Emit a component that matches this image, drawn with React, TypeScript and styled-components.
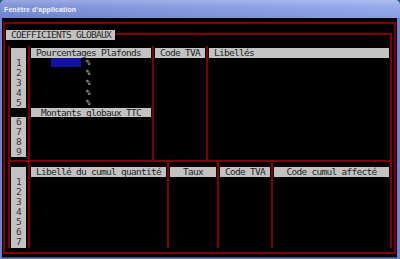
import React from "react";
import styled, { createGlobalStyle } from "styled-components";

const RED = "#820000";
const GRAY = "#c2c2c2";

const Global = createGlobalStyle`
  html, body { margin: 0; padding: 0; background: #235f70; }
  body { width: 400px; height: 259px; overflow: hidden; }
`;

const Window = styled.div`
  width: 400px;
  height: 259px;
  box-sizing: border-box;
  display: flex;
  flex-direction: column;
  background: #6c82d6;
  border-radius: 5px 5px 0 0;
  overflow: hidden;
`;

const TitleBar = styled.div`
  height: 18px;
  flex: none;
  display: flex;
  align-items: center;
  padding: 1px 0 0 4px;
  box-sizing: border-box;
  background: linear-gradient(to right, rgba(20, 30, 90, 0.12), rgba(255, 255, 255, 0.1)),
    linear-gradient(to bottom, #a6b8f2 0%, #8ea3e8 35%, #7b91de 100%);
  color: #eef1fb;
  font-family: "Liberation Sans", Arial, sans-serif;
  font-size: 7px;
  font-weight: bold;
  letter-spacing: 0.1px;
`;

const Client = styled.div`
  flex: 1;
  display: flex;
  flex-direction: column;
  background: #000;
  margin: 0 3px 4px 2px;
  box-shadow: 0 1px 0 #1f4d5c;
`;

const OuterFrame = styled.div`
  flex: 1;
  display: flex;
  flex-direction: column;
  border: 2px solid ${RED};
  margin: 4px 1px 3px 1px;
`;

const GroupBox = styled.div`
  position: relative;
  flex: 1;
  display: flex;
  flex-direction: column;
  margin: 9px 2px 4px 3px;
  border-top: 2px solid ${RED};
  border-right: 2px solid ${RED};
  padding-top: 11px;
`;

const mono = `
  font-family: "DejaVu Sans Mono", "Liberation Mono", monospace;
  font-size: 9.5px;
  letter-spacing: -0.72px;
`;

const GroupLabel = styled.div`
  position: absolute;
  left: -2px;
  top: -5px;
  width: 109px;
  height: 10px;
  box-sizing: border-box;
  padding-left: 5px;
  background: ${GRAY};
  color: #2a2a2a;
  ${mono};
  line-height: 10px;
  white-space: nowrap;
`;

const Body = styled.div`
  flex: 1;
  display: flex;
  flex-direction: column;
  border-left: 2px solid ${RED};
`;

const Section = styled.div<{ $cols: string; $height?: number; $top: number }>`
  display: grid;
  grid-template-columns: ${(p) => p.$cols};
  ${(p) => (p.$height ? `height: ${p.$height}px; flex: none; border-bottom: 2px solid ${RED};` : "flex: 1;")}
  box-sizing: border-box;
  --top: ${(p) => p.$top}px;
`;

const Col = styled.div<{ $sep?: boolean }>`
  display: flex;
  flex-direction: column;
  padding: var(--top) 1px 0 1px;
  ${(p) => (p.$sep ? `border-left: 2px solid ${RED};` : "")}
  min-width: 0;
`;

const Header = styled.div<{ $align?: "left" | "center"; $h?: number }>`
  height: ${(p) => p.$h ?? 10}px;
  flex: none;
  background: ${GRAY};
  color: #262626;
  ${mono};
  line-height: ${(p) => p.$h ?? 10}px;
  white-space: nowrap;
  overflow: hidden;
  text-align: ${(p) => (p.$align === "left" ? "left" : "center")};
  padding-left: ${(p) => (p.$align === "left" ? "5px" : "0")};
`;

const NumBox = styled.div<{ $fill?: boolean; $gapAfter?: number }>`
  width: 15px;
  background: ${GRAY};
  display: flex;
  flex-direction: column;
  ${(p) => (p.$fill ? "flex: 1; padding-bottom: 1px; margin-bottom: 0;" : "")}
  margin-bottom: ${(p) => p.$gapAfter ?? 0}px;
`;

const NumCell = styled.div<{ $h?: number; $flex?: boolean }>`
  height: ${(p) => (p.$flex ? "auto" : `${p.$h ?? 10}px`)};
  ${(p) => (p.$flex ? "flex: 1; display: flex; align-items: center; justify-content: center;" : "")}
  color: #3a3a3a;
  ${mono};
  line-height: ${(p) => p.$h ?? 10}px;
  text-align: center;
`;

const ValueRow = styled.div`
  height: 10px;
  display: flex;
  align-items: flex-start;
`;

const EditCell = styled.div<{ $active?: boolean }>`
  width: 30px;
  height: 9px;
  margin-left: 20px;
  background: ${(p) => (p.$active ? "#1212a2" : "transparent")};
`;

const Percent = styled.span`
  margin-left: 5px;
  color: #c8c8c8;
  font-family: "DejaVu Sans Mono", monospace;
  font-size: 7.5px;
  line-height: 10px;
`;

export default function App() {
  const upperNums1 = ["1", "2", "3", "4", "5"];
  const upperNums2 = ["6", "7", "8", "9"];
  const lowerNums = ["1", "2", "3", "4", "5", "6", "7"];
  return (
    <>
      <Global />
      <Window>
        <TitleBar>Fenêtre d'application</TitleBar>
        <Client>
          <OuterFrame>
            <GroupBox>
              <GroupLabel>COEFFICIENTS GLOBAUX</GroupLabel>
              <Body>
                <Section $cols="18px 124px 54px 1fr" $height={116} $top={2}>
                  <Col>
                    <NumBox $gapAfter={9}>
                      <NumCell />
                      {upperNums1.map((n) => (
                        <NumCell key={n}>{n}</NumCell>
                      ))}
                    </NumBox>
                    <NumBox>
                      {upperNums2.map((n) => (
                        <NumCell key={n}>{n}</NumCell>
                      ))}
                    </NumBox>
                  </Col>
                  <Col $sep>
                    <Header $align="left">Pourcentages Plafonds</Header>
                    {upperNums1.map((n, i) => (
                      <ValueRow key={n}>
                        <EditCell $active={i === 0} />
                        <Percent>%</Percent>
                      </ValueRow>
                    ))}
                    <Header $h={9}>Montants globaux TTC</Header>
                  </Col>
                  <Col $sep>
                    <Header>Code TVA</Header>
                  </Col>
                  <Col $sep>
                    <Header $align="left">Libellés</Header>
                  </Col>
                </Section>
                <Section $cols="18px 139px 50px 54px 1fr" $top={5}>
                  <Col>
                    <NumBox $fill>
                      <NumCell />
                      {lowerNums.map((n) => (
                        <NumCell key={n} $flex>
                          {n}
                        </NumCell>
                      ))}
                    </NumBox>
                  </Col>
                  <Col $sep>
                    <Header>Libellé du cumul quantité</Header>
                  </Col>
                  <Col $sep>
                    <Header>Taux</Header>
                  </Col>
                  <Col $sep>
                    <Header>Code TVA</Header>
                  </Col>
                  <Col $sep>
                    <Header>Code cumul affecté</Header>
                  </Col>
                </Section>
              </Body>
            </GroupBox>
          </OuterFrame>
        </Client>
      </Window>
    </>
  );
}
